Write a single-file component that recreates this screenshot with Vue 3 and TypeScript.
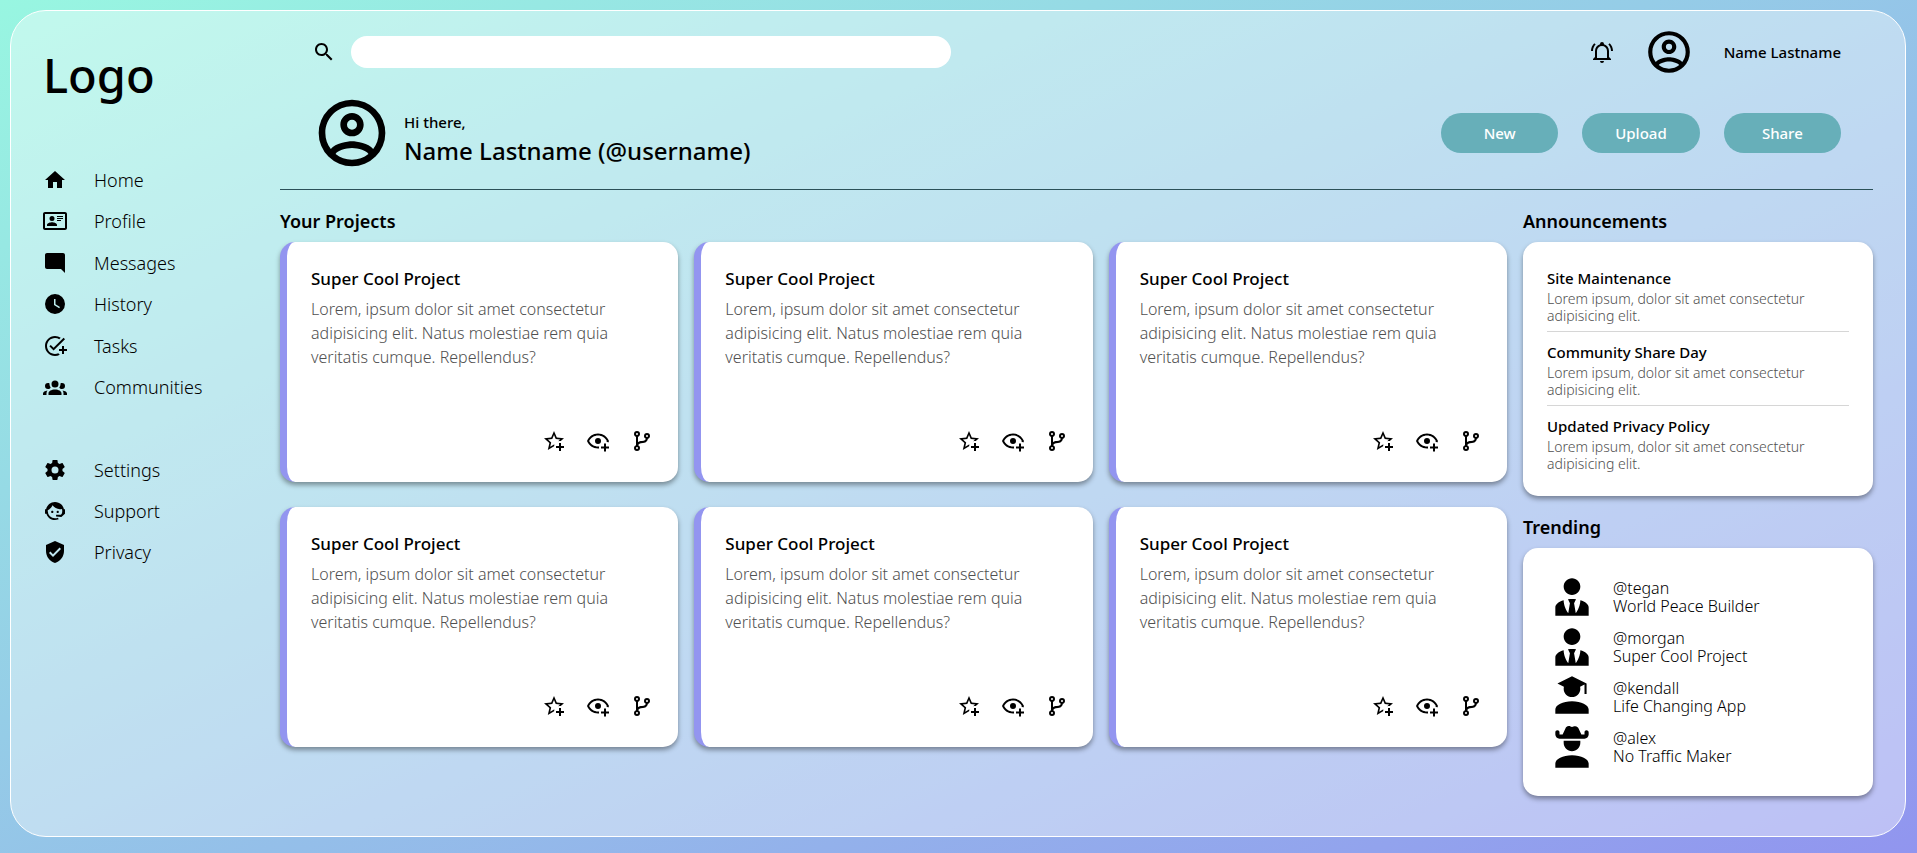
<script setup lang="ts">
interface NavItem {
  label: string
  icon: string
}

const icons: Record<string, string> = {
  home: 'M10,20V14H14V20H19V12H22L12,3L2,12H5V20H10Z',
  profile:
    'M22,3H2C0.91,3.04 0.04,3.91 0,5V19C0.04,20.09 0.91,20.96 2,21H22C23.09,20.96 23.96,20.09 24,19V5C23.96,3.91 23.09,3.04 22,3M22,19H2V5H22V19M14,17V15.75C14,14.09 10.66,13.25 9,13.25C7.34,13.25 4,14.09 4,15.75V17H14M9,7A2.5,2.5 0 0,0 6.5,9.5A2.5,2.5 0 0,0 9,12A2.5,2.5 0 0,0 11.5,9.5A2.5,2.5 0 0,0 9,7M14,7V8H20V7H14M14,9V10H20V9H14M14,11V12H18V11H14',
  messages: 'M21.99 4c0-1.1-.89-2-1.99-2H4c-1.1 0-2 .9-2 2v12c0 1.1.9 2 2 2h14l4 4-.01-18z',
  history:
    'M12,2A10,10 0 0,0 2,12A10,10 0 0,0 12,22A10,10 0 0,0 22,12A10,10 0 0,0 12,2M16.2,16.2L11,13V7H12.5V12.2L17,14.9L16.2,16.2Z',
  tasks:
    'M22 5.18 10.59 16.6l-4.24-4.24 1.41-1.41 2.83 2.83 10-10L22 5.18zM12 20c-4.41 0-8-3.59-8-8s3.59-8 8-8c1.57 0 3.04.46 4.28 1.25l1.45-1.45A10.02 10.02 0 0 0 12 2C6.48 2 2 6.48 2 12s4.48 10 10 10c1.73 0 3.36-.44 4.78-1.22l-1.5-1.5c-1 .46-2.11.72-3.28.72zm7-5h-3v2h3v3h2v-3h3v-2h-3v-3h-2v3z',
  communities:
    'M12,5.5A3.5,3.5 0 0,1 15.5,9A3.5,3.5 0 0,1 12,12.5A3.5,3.5 0 0,1 8.5,9A3.5,3.5 0 0,1 12,5.5M5,8C5.56,8 6.08,8.15 6.53,8.42C6.38,9.85 6.8,11.27 7.66,12.38C7.16,13.34 6.16,14 5,14A3,3 0 0,1 2,11A3,3 0 0,1 5,8M19,8A3,3 0 0,1 22,11A3,3 0 0,1 19,14C17.84,14 16.84,13.34 16.34,12.38C17.2,11.27 17.62,9.85 17.47,8.42C17.92,8.15 18.44,8 19,8M5.5,18.25C5.5,16.18 8.41,14.5 12,14.5C15.59,14.5 18.5,16.18 18.5,18.25V20H5.5V18.25M0,20V18.5C0,17.11 1.89,15.94 4.45,15.6C3.86,16.28 3.5,17.22 3.5,18.25V20H0M24,20H20.5V18.25C20.5,17.22 20.14,16.28 19.55,15.6C22.11,15.94 24,17.11 24,18.5V20Z',
  settings:
    'M12,15.5A3.5,3.5 0 0,1 8.5,12A3.5,3.5 0 0,1 12,8.5A3.5,3.5 0 0,1 15.5,12A3.5,3.5 0 0,1 12,15.5M19.43,12.97C19.47,12.65 19.5,12.33 19.5,12C19.5,11.67 19.47,11.34 19.43,11L21.54,9.37C21.73,9.22 21.78,8.95 21.66,8.73L19.66,5.27C19.54,5.05 19.27,4.96 19.05,5.05L16.56,6.05C16.04,5.66 15.5,5.32 14.87,5.07L14.5,2.42C14.46,2.18 14.25,2 14,2H10C9.75,2 9.54,2.18 9.5,2.42L9.13,5.07C8.5,5.32 7.96,5.66 7.44,6.05L4.95,5.05C4.73,4.96 4.46,5.05 4.34,5.27L2.34,8.73C2.21,8.95 2.27,9.22 2.46,9.37L4.57,11C4.53,11.34 4.5,11.67 4.5,12C4.5,12.33 4.53,12.65 4.57,12.97L2.46,14.63C2.27,14.78 2.21,15.05 2.34,15.27L4.34,18.73C4.46,18.95 4.73,19.03 4.95,18.95L7.44,17.94C7.96,18.34 8.5,18.68 9.13,18.93L9.5,21.58C9.54,21.82 9.75,22 10,22H14C14.25,22 14.46,21.82 14.5,21.58L14.87,18.93C15.5,18.67 16.04,18.34 16.56,17.94L19.05,18.95C19.27,19.03 19.54,18.95 19.66,18.73L21.66,15.27C21.78,15.05 21.73,14.78 21.54,14.63L19.43,12.97Z',
  support:
    'M18.72,14.76C19.07,13.91 19.26,13 19.26,12C19.26,11.28 19.15,10.59 18.96,9.95C18.31,10.1 17.63,10.18 16.92,10.18C13.86,10.18 11.15,8.67 9.5,6.34C8.61,8.5 6.91,10.26 4.77,11.22C4.73,11.47 4.73,11.74 4.73,12A7.27,7.27 0 0,0 12,19.27C13.05,19.27 14.06,19.04 14.97,18.63C15.54,19.72 15.8,20.26 15.78,20.26C14.14,20.81 12.87,21.08 12,21.08C9.58,21.08 7.27,20.13 5.57,18.42C4.53,17.38 3.76,16.11 3.33,14.73H2V10.18H3.09C3.93,6.04 7.6,2.92 12,2.92C14.4,2.92 16.71,3.87 18.42,5.58C19.69,6.84 20.54,8.45 20.89,10.18H22V14.67H22V14.69L22,14.73H21.94L18.38,18L13.08,17.4V15.73H17.91L18.72,14.76M9.27,11.77C9.57,11.77 9.86,11.89 10.07,12.11C10.28,12.32 10.4,12.61 10.4,12.91C10.4,13.21 10.28,13.5 10.07,13.71C9.86,13.92 9.57,14.04 9.27,14.04C8.64,14.04 8.13,13.54 8.13,12.91C8.13,12.28 8.64,11.77 9.27,11.77M14.72,11.77C15.35,11.77 15.85,12.28 15.85,12.91C15.85,13.54 15.35,14.04 14.72,14.04C14.09,14.04 13.58,13.54 13.58,12.91A1.14,1.14 0 0,1 14.72,11.77Z',
  privacy:
    'M10,17L6,13L7.41,11.59L10,14.17L16.59,7.58L18,9M12,1L3,5V11C3,16.55 6.84,21.74 12,23C17.16,21.74 21,16.55 21,11V5L12,1Z',
  search:
    'M15.5 14h-.79l-.28-.27C15.41 12.59 16 11.11 16 9.5 16 5.91 13.09 3 9.5 3S3 5.91 3 9.5 5.91 16 9.5 16c1.61 0 3.09-.59 4.23-1.57l.27.28v.79l5 4.99L20.49 19l-4.99-5zm-6 0C7.01 14 5 11.99 5 9.5S7.01 5 9.5 5 14 7.01 14 9.5 11.99 14 9.5 14z',
  bell: 'M10,21H14A2,2 0 0,1 12,23A2,2 0 0,1 10,21M21,19V20H3V19L5,17V11C5,7.9 7.03,5.17 10,4.29C10,4.19 10,4.1 10,4A2,2 0 0,1 12,2A2,2 0 0,1 14,4C14,4.1 14,4.19 14,4.29C16.97,5.17 19,7.9 19,11V17L21,19M17,11A5,5 0 0,0 12,6A5,5 0 0,0 7,11V18H17V11M19.75,3.19L18.33,4.61C20.04,6.3 21,8.6 21,11H23C23,8.07 21.84,5.25 19.75,3.19M1,11H3C3,8.6 3.96,6.3 5.67,4.61L4.25,3.19C2.16,5.25 1,8.07 1,11Z',
  avatar:
    'M12,2A10,10 0 0,0 2,12A10,10 0 0,0 12,22A10,10 0 0,0 22,12A10,10 0 0,0 12,2M7.07,18.28C7.5,17.38 10.12,16.5 12,16.5C13.88,16.5 16.5,17.38 16.93,18.28C15.57,19.36 13.86,20 12,20C10.14,20 8.43,19.36 7.07,18.28M18.36,16.83C16.93,15.09 13.46,14.5 12,14.5C10.54,14.5 7.07,15.09 5.64,16.83C4.62,15.5 4,13.82 4,12C4,7.59 7.59,4 12,4C16.41,4 20,7.59 20,12C20,13.82 19.38,15.5 18.36,16.83M12,6C10.06,6 8.5,7.56 8.5,9.5C8.5,11.44 10.06,13 12,13C13.94,13 15.5,11.44 15.5,9.5C15.5,7.56 13.94,6 12,6M12,11A1.5,1.5 0 0,1 10.5,9.5A1.5,1.5 0 0,1 12,8A1.5,1.5 0 0,1 13.5,9.5A1.5,1.5 0 0,1 12,11Z',
  star: 'M5.8 21L7.4 14L2 9.2L9.2 8.6L12 2L14.8 8.6L22 9.2L18.8 12H18C17.3 12 16.6 12.1 15.9 12.4L18.1 10.5L13.7 10.1L12 6.1L10.3 10.1L5.9 10.5L9.2 13.4L8.2 17.7L12 15.4L12.5 15.7C12.3 16.2 12.1 16.8 12.1 17.3L5.8 21M17 14V17H14V19H17V22H19V19H22V17H19V14H17Z',
  watch:
    'M12,4.5C7,4.5 2.73,7.61 1,12C2.73,16.39 7,19.5 12,19.5C12.36,19.5 12.72,19.5 13.08,19.45C13.03,19.13 13,18.82 13,18.5C13,18.14 13.04,17.78 13.1,17.42C12.74,17.46 12.37,17.5 12,17.5C8.24,17.5 4.83,15.36 3.18,12C4.83,8.64 8.24,6.5 12,6.5C15.76,6.5 19.17,8.64 20.82,12C20.7,12.24 20.56,12.45 20.43,12.68C21.09,12.84 21.72,13.11 22.31,13.5C22.59,13 22.81,12.5 23,12C21.27,7.61 17,4.5 12,4.5M12,9A3,3 0 0,0 9,12A3,3 0 0,0 12,15A3,3 0 0,0 15,12A3,3 0 0,0 12,9M18,14.5V17.5H15V19.5H18V22.5H20V19.5H23V17.5H20V14.5H18Z',
  fork: 'M13,14C9.64,14 8.54,15.35 8.18,16.24C9.25,16.7 10,17.76 10,19A3,3 0 0,1 7,22A3,3 0 0,1 4,19C4,17.69 4.83,16.58 6,16.17V7.83C4.83,7.42 4,6.31 4,5A3,3 0 0,1 7,2A3,3 0 0,1 10,5C10,6.31 9.17,7.42 8,7.83V13.12C8.88,12.47 10.16,12 12,12C14.67,12 15.56,10.66 15.85,9.77C14.77,9.32 14,8.25 14,7A3,3 0 0,1 17,4A3,3 0 0,1 20,7C20,8.34 19.12,9.5 17.91,9.86C17.65,11.29 16.68,14 13,14M7,18A1,1 0 0,0 6,19A1,1 0 0,0 7,20A1,1 0 0,0 8,19A1,1 0 0,0 7,18M7,4A1,1 0 0,0 6,5A1,1 0 0,0 7,6A1,1 0 0,0 8,5A1,1 0 0,0 7,4M17,6A1,1 0 0,0 16,7A1,1 0 0,0 17,8A1,1 0 0,0 18,7A1,1 0 0,0 17,6Z',
  tie: 'M12 3C14.21 3 16 4.79 16 7S14.21 11 12 11 8 9.21 8 7 9.79 3 12 3M16 13.54C16 14.6 15.72 17.07 13.81 19.83L13 15L13.94 13.12C13.32 13.05 12.67 13 12 13S10.68 13.05 10.06 13.12L11 15L10.19 19.83C8.28 17.07 8 14.6 8 13.54C5.61 14.24 4 15.5 4 17V21H20V17C20 15.5 18.4 14.24 16 13.54Z',
  school:
    'M16 8C16 10.21 14.21 12 12 12C9.79 12 8 10.21 8 8L8.11 7.06L5 5.5L12 2L19 5.5V10.5H18V6L15.89 7.06L16 8M12 14C16.42 14 20 15.79 20 18V20H4V18C4 15.79 7.58 14 12 14Z',
  cowboy:
    'M20 22H4V20C4 17.8 7.6 16 12 16S20 17.8 20 20M8 9H16V10C16 12.2 14.2 14 12 14S8 12.2 8 10M19 4C18.4 4 18 4.4 18 5V6H16.5L15.1 3C15 2.8 14.9 2.6 14.7 2.5C14.2 2 13.4 1.9 12.7 2.2L12 2.4L11.3 2.1C10.6 1.8 9.8 1.9 9.3 2.4C9.1 2.6 9 2.8 8.9 3L7.5 6H6V5C6 4.4 5.6 4 5 4S4 4.4 4 5V6C4 7.1 4.9 8 6 8H18C19.1 8 20 7.1 20 6V5C20 4.5 19.6 4 19 4Z',
}

const navGroups: NavItem[][] = [
  [
    { label: 'Home', icon: 'home' },
    { label: 'Profile', icon: 'profile' },
    { label: 'Messages', icon: 'messages' },
    { label: 'History', icon: 'history' },
    { label: 'Tasks', icon: 'tasks' },
    { label: 'Communities', icon: 'communities' },
  ],
  [
    { label: 'Settings', icon: 'settings' },
    { label: 'Support', icon: 'support' },
    { label: 'Privacy', icon: 'privacy' },
  ],
]

const actions = ['New', 'Upload', 'Share']

const projects = Array.from({ length: 6 }, (_, id) => ({
  id,
  title: 'Super Cool Project',
  text: 'Lorem, ipsum dolor sit amet consectetur adipisicing elit. Natus molestiae rem quia veritatis cumque. Repellendus?',
}))

const projectActions = [
  { icon: 'star', label: 'Star' },
  { icon: 'watch', label: 'Watch' },
  { icon: 'fork', label: 'Fork' },
]

const announcements = ['Site Maintenance', 'Community Share Day', 'Updated Privacy Policy']

const trending = [
  { handle: '@tegan', project: 'World Peace Builder', icon: 'tie' },
  { handle: '@morgan', project: 'Super Cool Project', icon: 'tie' },
  { handle: '@kendall', project: 'Life Changing App', icon: 'school' },
  { handle: '@alex', project: 'No Traffic Maker', icon: 'cowboy' },
]
</script>

<template>
  <div class="page">
    <div class="dashboard">
      <aside class="sidebar">
        <div class="logo">Logo</div>
        <nav class="nav">
          <ul v-for="(group, i) in navGroups" :key="i" class="nav-list">
            <li v-for="item in group" :key="item.label">
              <a href="#" class="nav-link">
                <svg class="icon" viewBox="0 0 24 24" aria-hidden="true"><path :d="icons[item.icon]" /></svg>
                {{ item.label }}
              </a>
            </li>
          </ul>
        </nav>
      </aside>

      <div class="main">
        <header class="header">
          <div class="header-row">
            <form class="search" role="search" @submit.prevent>
              <label for="search" aria-label="Search">
                <svg class="icon" viewBox="0 0 24 24" aria-hidden="true"><path :d="icons.search" /></svg>
              </label>
              <input id="search" class="search-input" type="search" />
            </form>
            <div class="account">
              <button class="icon-button" type="button" aria-label="Notifications">
                <svg class="icon" viewBox="0 0 24 24" aria-hidden="true"><path :d="icons.bell" /></svg>
              </button>
              <svg class="avatar" viewBox="0 0 24 24" aria-hidden="true"><path :d="icons.avatar" /></svg>
              <span class="account-name">Name Lastname</span>
            </div>
          </div>

          <div class="header-row">
            <div class="greeting">
              <svg class="avatar-large" viewBox="0 0 24 24" aria-hidden="true"><path :d="icons.avatar" /></svg>
              <div class="greeting-text">
                <div class="hi">Hi there,</div>
                <div class="username">Name Lastname (@username)</div>
              </div>
            </div>
            <div class="actions">
              <button v-for="action in actions" :key="action" class="action" type="button">{{ action }}</button>
            </div>
          </div>
        </header>

        <div class="content">
          <section>
            <h2 class="heading">Your Projects</h2>
            <div class="projects">
              <article v-for="project in projects" :key="project.id" class="card project">
                <h3 class="project-title">{{ project.title }}</h3>
                <p class="project-text">{{ project.text }}</p>
                <div class="project-actions">
                  <button
                    v-for="action in projectActions"
                    :key="action.icon"
                    class="icon-button"
                    type="button"
                    :aria-label="action.label"
                  >
                    <svg class="icon" viewBox="0 0 24 24" aria-hidden="true"><path :d="icons[action.icon]" /></svg>
                  </button>
                </div>
              </article>
            </div>
          </section>

          <div class="side">
            <section>
              <h2 class="heading">Announcements</h2>
              <div class="card announcements">
                <article v-for="title in announcements" :key="title" class="announcement">
                  <h3 class="announcement-title">{{ title }}</h3>
                  <p class="announcement-text">Lorem ipsum, dolor sit amet consectetur adipisicing elit.</p>
                </article>
              </div>
            </section>
            <section>
              <h2 class="heading">Trending</h2>
              <ul class="card trending">
                <li v-for="user in trending" :key="user.handle" class="trend">
                  <svg class="avatar" viewBox="0 0 24 24" aria-hidden="true"><path :d="icons[user.icon]" /></svg>
                  <p class="trend-text">{{ user.handle }}<br />{{ user.project }}</p>
                </li>
              </ul>
            </section>
          </div>
        </div>
      </div>
    </div>
  </div>
</template>

<style>
body {
  margin: 0;
}
</style>

<style scoped>
.page {
  box-sizing: border-box;
  min-height: 100vh;
  padding: 10px 11px 15px 10px;
  background: linear-gradient(to bottom right, #98f6e1, #9195ef);
  color: #000;
  font-family: 'Noto Sans', 'Open Sans', sans-serif;
  font-weight: 300;
}

h2,
h3,
p,
ul {
  margin: 0;
  padding: 0;
}

ul {
  list-style: none;
}

.dashboard {
  display: grid;
  grid-template-columns: 237px minmax(0, 1fr);
  padding: 16px 32px 40px;
  border: 1px solid #fff;
  border-radius: 36px;
  background: rgba(255, 255, 255, 0.4);
}

.icon,
.avatar,
.avatar-large {
  display: block;
  flex: none;
  fill: currentColor;
}

.icon {
  width: 24px;
  height: 24px;
}

.avatar {
  width: 50px;
  height: 50px;
}

.avatar-large {
  width: 80px;
  height: 80px;
}

.icon-button {
  display: block;
  padding: 0;
  border: 0;
  background: none;
  color: inherit;
  cursor: pointer;
}

.logo {
  margin-top: 18px;
  font-size: 47px;
  font-weight: 500;
  line-height: 60px;
}

.nav {
  display: grid;
  grid-template-rows: 249px 124px;
  gap: 41px;
  margin-top: 54px;
}

.nav-list {
  display: grid;
  grid-auto-rows: 1fr;
}

.nav-list li {
  display: flex;
  align-items: center;
}

.nav-link {
  display: flex;
  align-items: center;
  gap: 27px;
  color: inherit;
  font-size: 18px;
  line-height: 24px;
  text-decoration: none;
}

.header {
  display: flex;
  flex-direction: column;
  gap: 16px;
  padding: 0 32px 16px;
  border-bottom: 1px solid #2b5058;
}

.header-row {
  display: flex;
  align-items: center;
  justify-content: space-between;
  gap: 24px;
}

.search {
  display: flex;
  flex: 0 1 639px;
  align-items: center;
  gap: 15px;
}

.search-input {
  flex: 1;
  box-sizing: border-box;
  min-width: 0;
  height: 32px;
  padding: 0 16px;
  border: 0;
  border-radius: 16px;
  background: #fff;
  font: inherit;
  font-size: 16px;
}

.account {
  display: flex;
  align-items: center;
  gap: 30px;
}

.account-name {
  font-size: 15px;
  font-weight: 500;
}

.greeting {
  display: flex;
  align-items: center;
  gap: 12px;
}

.greeting-text {
  padding-top: 14px;
  font-weight: 500;
}

.hi {
  font-size: 15px;
  line-height: 21px;
}

.username {
  font-size: 24px;
  line-height: 35px;
}

.actions {
  display: grid;
  grid-template-columns: repeat(3, 1fr);
  gap: 24px;
  width: 400px;
}

.action {
  height: 40px;
  padding: 0;
  border: 0;
  border-radius: 20px;
  background: #67afb9;
  color: #fff;
  font: inherit;
  font-size: 15px;
  font-weight: 500;
  cursor: pointer;
}

.content {
  display: grid;
  grid-template-columns: minmax(0, 1fr) 350px;
  gap: 16px;
  margin-top: 18px;
}

.heading {
  margin-bottom: 7px;
  font-size: 18px;
  font-weight: 600;
  line-height: 27px;
}

.card {
  border-radius: 15px;
  background: #fff;
  box-shadow: 0 3px 5px rgba(0, 0, 0, 0.38);
}

.projects {
  display: grid;
  grid-template-columns: repeat(3, minmax(0, 1fr));
  gap: 25px 16px;
}

.project {
  display: flex;
  flex-direction: column;
  box-sizing: border-box;
  min-height: 240px;
  padding: 24px 24px 29px;
  border-left: 7px solid #9395f0;
}

.project-title {
  font-size: 17px;
  font-weight: 500;
  line-height: 25px;
}

.project-text {
  margin-top: 6px;
  color: #505050;
  font-size: 16px;
  line-height: 24px;
}

.project-actions {
  display: flex;
  gap: 20px;
  justify-content: flex-end;
  margin-top: auto;
}

.side {
  display: flex;
  flex-direction: column;
  gap: 18px;
}

.announcements {
  padding: 24px;
}

.announcement + .announcement {
  margin-top: 7px;
  padding-top: 8px;
  border-top: 1px solid #d6d6d6;
}

.announcement-title {
  font-size: 15px;
  font-weight: 500;
  line-height: 24px;
}

.announcement-text {
  color: #505050;
  font-size: 14px;
  line-height: 17px;
}

.trending {
  padding: 24px;
}

.trend {
  display: flex;
  align-items: center;
  gap: 16px;
}

.trend-text {
  font-size: 16px;
  line-height: 18px;
}
</style>
